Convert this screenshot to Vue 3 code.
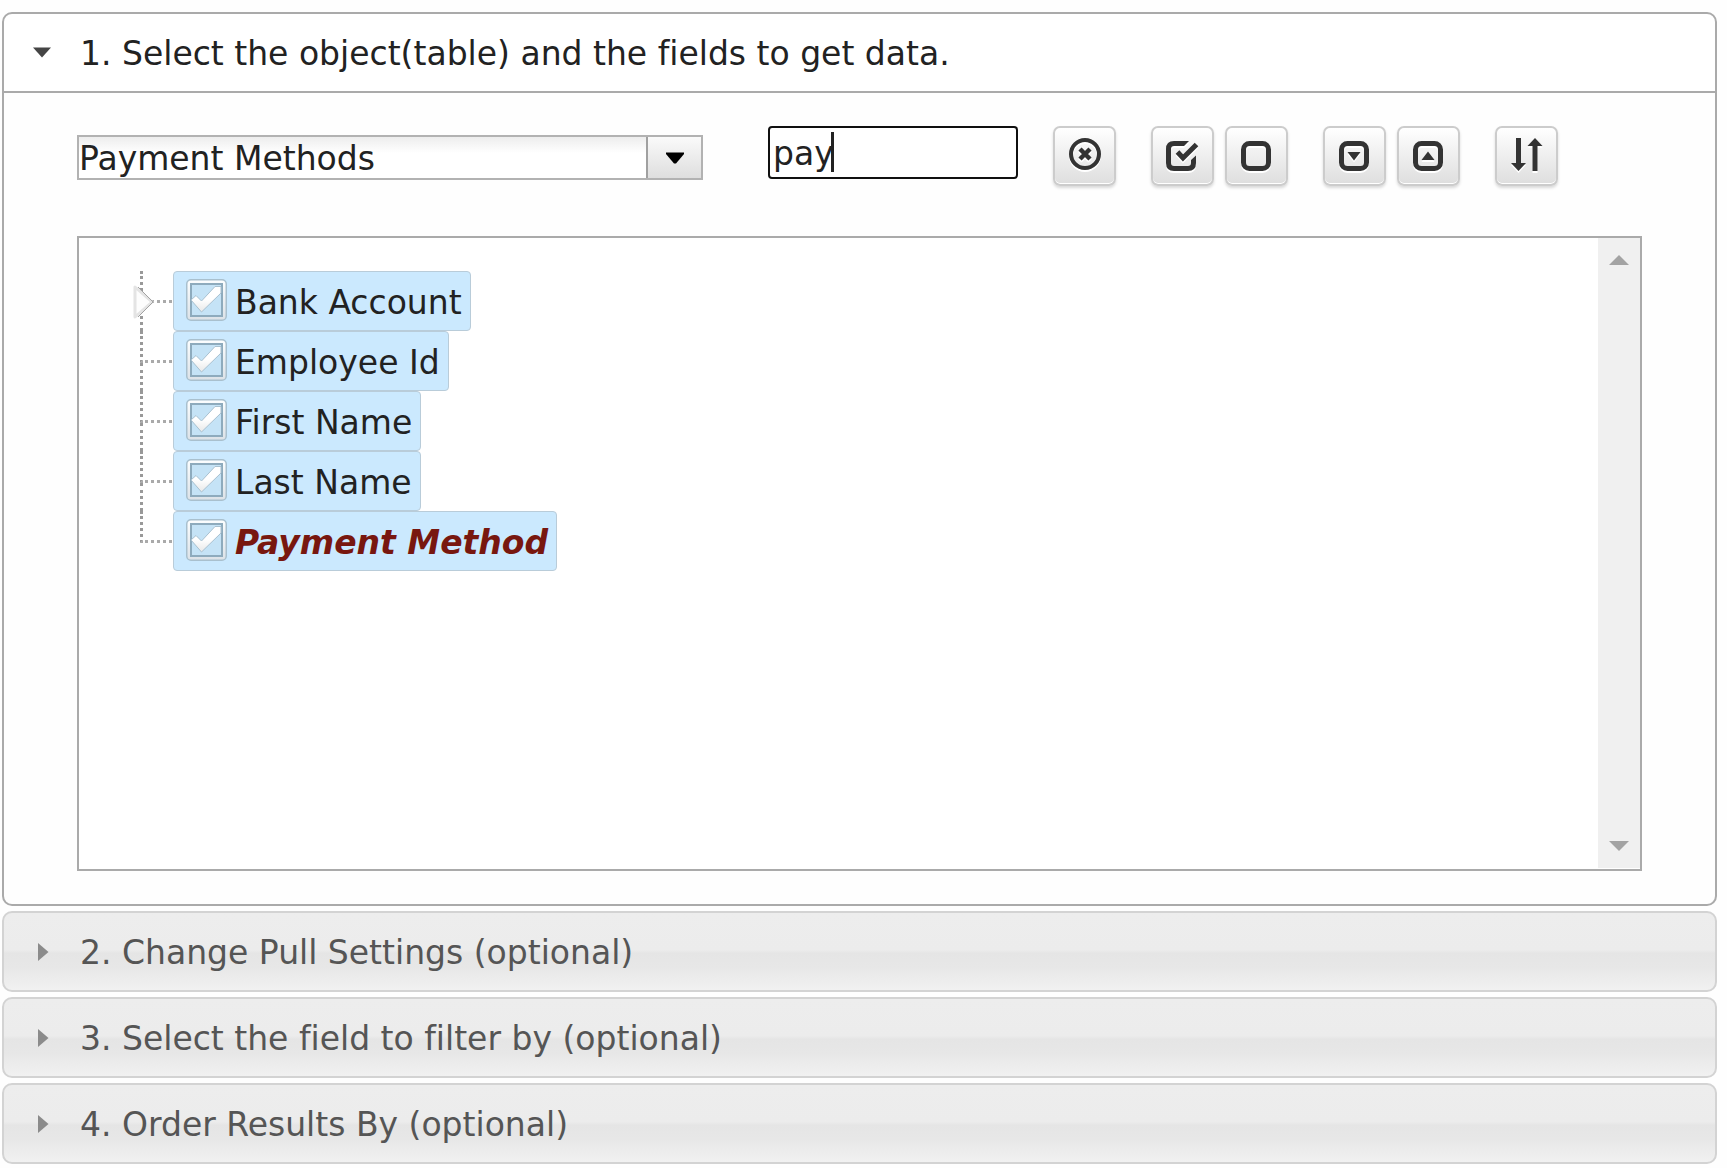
<script setup>
import { ref } from 'vue'

const selectedObject = ref('Payment Methods')
const filterText = ref('pay')

const fields = ref([
  { id: 'bank-account', label: 'Bank Account', checked: true, expandable: true },
  { id: 'employee-id', label: 'Employee Id', checked: true },
  { id: 'first-name', label: 'First Name', checked: true },
  { id: 'last-name', label: 'Last Name', checked: true },
  { id: 'payment-method', label: 'Payment Method', checked: true, match: true },
])

const collapsed = [
  '2. Change Pull Settings (optional)',
  '3. Select the field to filter by (optional)',
  '4. Order Results By (optional)',
]
</script>

<template>
  <main class="accordion">
    <section class="section">
      <h3 class="heading">
        <button type="button" class="toggle open" aria-expanded="true">
          <svg class="marker" width="20" height="20" viewBox="0 0 20 20" aria-hidden="true">
            <path d="M1 4.500H19L10 14.500Z" fill="#454545" />
          </svg>
          <span class="title">1. Select the object(table) and the fields to get data.</span>
        </button>
      </h3>

      <div class="panel">
        <div class="toolbar">
          <div class="combo">
            <select v-model="selectedObject" aria-label="Object">
              <option>Payment Methods</option>
            </select>
            <span class="combo-arrow">
              <svg width="18" height="12" viewBox="0 0 18 12" aria-hidden="true">
                <path d="M0 .5H18V2L10 11.500H8L0 2Z" fill="#000" />
              </svg>
            </span>
          </div>

          <div class="search">
            <input v-model="filterText" type="text" aria-label="Filter fields" />
            <span class="caret"></span>
          </div>

          <button type="button" class="tool" aria-label="Clear filter">
            <svg viewBox="0 0 36 40" aria-hidden="true">
              <circle cx="18" cy="16" r="14" fill="none" stroke="#333" stroke-width="4" />
              <path d="M13 11L23 21M23 11L13 21" stroke="#333" stroke-width="4.500" />
            </svg>
          </button>

          <div class="tools">
            <button type="button" class="tool" aria-label="Check all">
              <svg viewBox="0 0 36 40" aria-hidden="true">
                <path d="M24 3H9Q1 3 1 11V25Q1 33 9 33H23Q31 33 31 25V17.500L26 22V25Q26 28 23 28H9Q6 28 6 25V11Q6 8 9 8H19Z" fill="#333" />
                <path d="M12.500 14L18 20L31.500 6.500" fill="none" stroke="#333" stroke-width="5" />
              </svg>
            </button>
            <button type="button" class="tool" aria-label="Uncheck all">
              <svg viewBox="0 0 36 40" aria-hidden="true">
                <rect x="4.500" y="5.500" width="25" height="25" rx="6" fill="none" stroke="#333" stroke-width="5" />
              </svg>
            </button>
          </div>

          <div class="tools">
            <button type="button" class="tool" aria-label="Expand all">
              <svg viewBox="0 0 36 40" aria-hidden="true">
                <rect x="4.500" y="5.500" width="25" height="25" rx="6" fill="none" stroke="#333" stroke-width="5" />
                <path d="M10.500 14H23.500L17 22.500Z" fill="#333" />
              </svg>
            </button>
            <button type="button" class="tool" aria-label="Collapse all">
              <svg viewBox="0 0 36 40" aria-hidden="true">
                <rect x="4.500" y="5.500" width="25" height="25" rx="6" fill="none" stroke="#333" stroke-width="5" />
                <path d="M10.500 22H23.500L17 13.500Z" fill="#333" />
              </svg>
            </button>
          </div>

          <button type="button" class="tool" aria-label="Sort">
            <svg viewBox="0 0 36 40" aria-hidden="true">
              <path d="M7 0H12V25H17L9.500 33L2 25H7Z" fill="#333" />
              <path d="M23.500 33H28.500V8H33.500L26 0L18.500 8H23.500Z" fill="#333" />
            </svg>
          </button>
        </div>

        <div class="tree-box">
          <ul class="tree">
            <li v-for="field in fields" :key="field.id" class="node">
              <span class="branch">
                <svg
                  v-if="field.expandable"
                  class="expander"
                  width="24"
                  height="36"
                  viewBox="0 0 24 36"
                  aria-hidden="true"
                >
                  <path d="M3 3V33L20 18Z" fill="#fdfdfd" stroke="#e4e4e4" stroke-width="3" stroke-linejoin="round" />
                  <path d="M6 3L21 18L6 33" fill="none" stroke="#a2a2a2" />
                </svg>
              </span>
              <label class="field" :class="{ match: field.match }">
                <span class="check">
                  <input v-model="field.checked" type="checkbox" />
                  <svg width="42" height="42" viewBox="0 0 42 42" aria-hidden="true">
                    <defs>
                      <linearGradient :id="'frame-' + field.id" gradientUnits="userSpaceOnUse" x1="0" y1="2" x2="0" y2="40">
                        <stop offset="0" stop-color="#fbfdfe" />
                        <stop offset="1" stop-color="#dde3e8" />
                      </linearGradient>
                      <linearGradient :id="'tick-' + field.id" x1="0" y1="0" x2="0" y2="1">
                        <stop offset="0" stop-color="#fff" />
                        <stop offset="0.5" stop-color="#fff" />
                        <stop offset="1" stop-color="#e8e8e8" />
                      </linearGradient>
                    </defs>
                    <rect x="1" y="1" width="39" height="40" rx="4" fill="none" stroke="#a9c0ce" stroke-width="2" />
                    <rect x="3" y="3" width="35" height="36" rx="2" fill="none" :stroke="`url(#frame-${field.id})`" stroke-width="3" />
                    <rect x="5" y="5" width="31" height="32" fill="#c5e3f6" stroke="#8eabbd" stroke-width="2" />
                    <path
                      v-if="field.checked"
                      d="M5 21L10 16.500L15.500 22L29 7.500H35V14L15.500 33Z"
                      :fill="`url(#tick-${field.id})`"
                      stroke="#a9c1d0"
                    />
                  </svg>
                </span>
                <span class="label">{{ field.label }}</span>
              </label>
            </li>
          </ul>
          <div class="scrollbar" aria-hidden="true">
            <svg width="20" height="10" viewBox="0 0 20 10"><path d="M0 10L10 0L20 10Z" fill="#a3a3a3" /></svg>
            <svg width="20" height="10" viewBox="0 0 20 10"><path d="M0 0L10 10L20 0Z" fill="#a3a3a3" /></svg>
          </div>
        </div>
      </div>
    </section>

    <section v-for="title in collapsed" :key="title" class="section">
      <h3 class="heading">
        <button type="button" class="toggle" aria-expanded="false">
          <svg class="marker" width="20" height="20" viewBox="0 0 20 20" aria-hidden="true">
            <path d="M6 1V19L16.500 10Z" fill="#8b8b8b" />
          </svg>
          <span class="title">{{ title }}</span>
        </button>
      </h3>
    </section>
  </main>
</template>

<style>
body {
  background: #fefefe;
}
</style>

<style scoped>
* {
  box-sizing: border-box;
}

.accordion {
  display: flex;
  flex-direction: column;
  gap: 5px;
  margin: 12px 10px 0 2px;
  color: #222;
  font: 33px/40px "DejaVu Sans", Verdana, sans-serif;
  font-variant-ligatures: none;
}

button,
input,
select {
  margin: 0;
  color: inherit;
  font: inherit;
}

.heading {
  margin: 0;
  font: inherit;
}

.toggle {
  display: flex;
  align-items: center;
  gap: 28px;
  width: 100%;
  height: 81px;
  padding: 0 28px;
  border: 2px solid #d3d3d3;
  border-radius: 10px;
  background: linear-gradient(#ededed, #ececec 48%, #e5e5e5 52%, #e7e7e7 70%, #f1f1f1);
  color: #555;
  text-align: left;
}

.toggle.open {
  border-color: #aaa;
  border-radius: 10px 10px 0 0;
  background: #fff;
  color: #222;
}

.marker {
  flex: none;
}

.title {
  padding-top: 2px;
}

.panel {
  padding: 33px 73px;
  border: 2px solid #aaa;
  border-top: 0;
  border-radius: 0 0 10px 10px;
}

.toolbar {
  display: flex;
  align-items: flex-start;
  gap: 35px;
  margin-bottom: 50px;
}

.combo {
  display: grid;
  flex: 0 0 40%;
  grid-template: 41px / 1fr 55px;
  margin: 9px 30px 0 0;
  border: 2px solid #b2b2b2;
}

.combo select {
  grid-area: 1 / 1 / 2 / 3;
  height: 41px;
  padding: 2px 54px 0 0;
  border: 0;
  border-radius: 0;
  outline: 0;
  background: linear-gradient(#ededed, #fff 16px);
  appearance: none;
}

.combo-arrow {
  display: flex;
  grid-area: 1 / 2;
  align-items: center;
  justify-content: center;
  border-left: 2px solid #a0a0a0;
  background: linear-gradient(#fafafa, #dedede);
  pointer-events: none;
}

.search {
  position: relative;
  flex: 0 0 16%;
  height: 53px;
}

.search input {
  width: 100%;
  height: 100%;
  padding: 2px 3px 0;
  border: 2px solid #101010;
  border-radius: 4px;
  outline: 0;
  background: #fff;
  caret-color: transparent;
}

.caret {
  position: absolute;
  top: 6px;
  left: 63px;
  width: 3px;
  height: 40px;
  background: #222;
}

.tools {
  display: flex;
  gap: 11px;
}

.tool {
  display: flex;
  flex: none;
  align-items: flex-start;
  justify-content: center;
  width: 63px;
  height: 60px;
  padding: 10px 0 0;
  border: 2px solid #ccc;
  border-radius: 7px;
  background: linear-gradient(#fff, #dedede);
  box-shadow: 0 2px 3px rgba(0, 0, 0, 0.15), inset 0 -1px 0 #fff;
}

.tool svg {
  width: 36px;
  height: 40px;
  filter: drop-shadow(0 2px 0 #fff);
}

.tree-box {
  display: flex;
  justify-content: space-between;
  height: 635px;
  border: 2px solid #aaa;
  background: #fff;
}

.tree {
  margin: 0;
  padding: 33px 0 0 61px;
  list-style: none;
}

.node {
  display: flex;
  height: 60px;
}

.branch {
  display: grid;
  grid-template-rows: 32px 28px;
  width: 33px;
}

/* dotted connector: trunk on the left, arm at mid height */
.branch::before {
  width: 35px;
  border-bottom: 3px dotted #aaa;
  border-left: 3px dotted #999;
  content: "";
}

.node:not(:last-child) .branch::after {
  grid-row: 2;
  border-left: 3px dotted #999;
  content: "";
}

.expander {
  position: absolute;
  margin: 13px 0 0 -8px;
}

.field {
  display: flex;
  z-index: 1;
  align-items: center;
  gap: 7px;
  height: 60px;
  padding: 0 8px 0 12px;
  border: 1px solid #b9ccd9;
  border-radius: 4px;
  background: #cbe9fe;
  white-space: nowrap;
}

.field.match {
  color: #78170f;
  font-style: italic;
  font-weight: 700;
}

.label {
  padding-top: 3px;
}

.check {
  display: grid;
  margin-bottom: 3px;
}

.check input {
  grid-area: 1 / 1;
  width: 42px;
  height: 42px;
  margin: 0;
  appearance: none;
}

.check svg {
  grid-area: 1 / 1;
  pointer-events: none;
}

.scrollbar {
  display: flex;
  flex-direction: column;
  align-items: center;
  justify-content: space-between;
  width: 42px;
  height: 630px;
  padding: 17px 0;
  background: #f0f0f0;
}
</style>
